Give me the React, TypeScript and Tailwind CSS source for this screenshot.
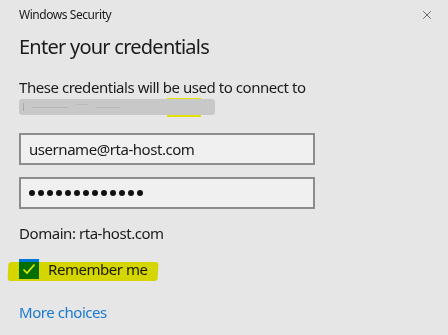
import { X } from "lucide-react";

const dots = Array.from({ length: 13 });

export default function App() {
  return (
    <div
      className="w-[448px] h-[335px] bg-[#e6e6e6] text-[#1b1b1b] overflow-hidden"
      style={{ fontFamily: '"Noto Sans", "Open Sans", sans-serif' }}
    >
      {/* Title bar */}
      <div className="flex items-center justify-between pl-[19px] pr-[14px] pt-[6px] h-[24px]">
        <span className="text-[12px] leading-none tracking-[-0.45px]">Windows Security</span>
        <X size={14} strokeWidth={1.2} className="text-[#333]" />
      </div>

      <div className="flex flex-col items-start px-[19px] tracking-[-0.45px]">
        <h1 className="text-[20px] leading-none mt-[13px] tracking-[-0.75px]">Enter your credentials</h1>

        <p className="text-[15px] leading-none mt-[23px]">These credentials will be used to connect to</p>

        {/* Redacted host, highlighter peeking out behind it */}
        <div className="relative mt-[1px] h-[21px] w-[196px]">
          <div className="absolute left-[148px] top-[2px] bottom-0 w-[34px] bg-[#e2e200]" />
          <div className="relative mt-[3px] h-[16px] rounded-[3px] bg-[#c8c8c8] flex items-center gap-[8px] pl-[4px]">
            <div className="h-[8px] w-[1px] bg-[#a8a8a8]" />
            <div className="h-[1px] w-[36px] bg-[#b6b6b6]" />
            <div className="h-[1px] w-[12px] bg-[#bababa] -translate-y-[3px]" />
            <div className="h-[1px] w-[24px] bg-[#bababa]" />
          </div>
        </div>

        {/* Inputs */}
        <div className="mt-[16px] w-[296px] h-[32px] border-2 border-[#8c8c8c] bg-[#f0f0f0] flex items-center pl-[8px] text-[15px]">
          username@rta-host.com
        </div>
        <div className="mt-[12px] w-[296px] h-[32px] border-2 border-[#8c8c8c] bg-[#f0f0f0] flex items-center gap-[3px] pl-[8px]">
          {dots.map((_, i) => (
            <span key={i} className="w-[6px] h-[6px] rounded-full bg-[#111]" />
          ))}
        </div>

        <p className="text-[15px] leading-none mt-[17px]">Domain: rta-host.com</p>

        {/* Remember me */}
        <div className="relative mt-[18px] flex items-center gap-[9px] h-[20px]">
          <div className="w-[20px] h-[20px] bg-[#0078d7] flex items-center justify-center">
            <svg width="14" height="14" viewBox="0 0 14 14" fill="none">
              <path d="M1.5 7.5 L5 11 L12.5 2.5" stroke="#ffffff" strokeWidth="1.6" />
            </svg>
          </div>
          <span className="text-[15px] leading-none">Remember me</span>
          {/* highlighter stroke */}
          <div className="absolute left-[-11px] top-[3px] w-[150px] h-[19px] bg-[#ecec00] mix-blend-multiply rounded-[3px] -skew-x-3" />
        </div>

        <p className="text-[15px] leading-none mt-[26px] text-[#1a7ad0]">More choices</p>
      </div>
    </div>
  );
}
